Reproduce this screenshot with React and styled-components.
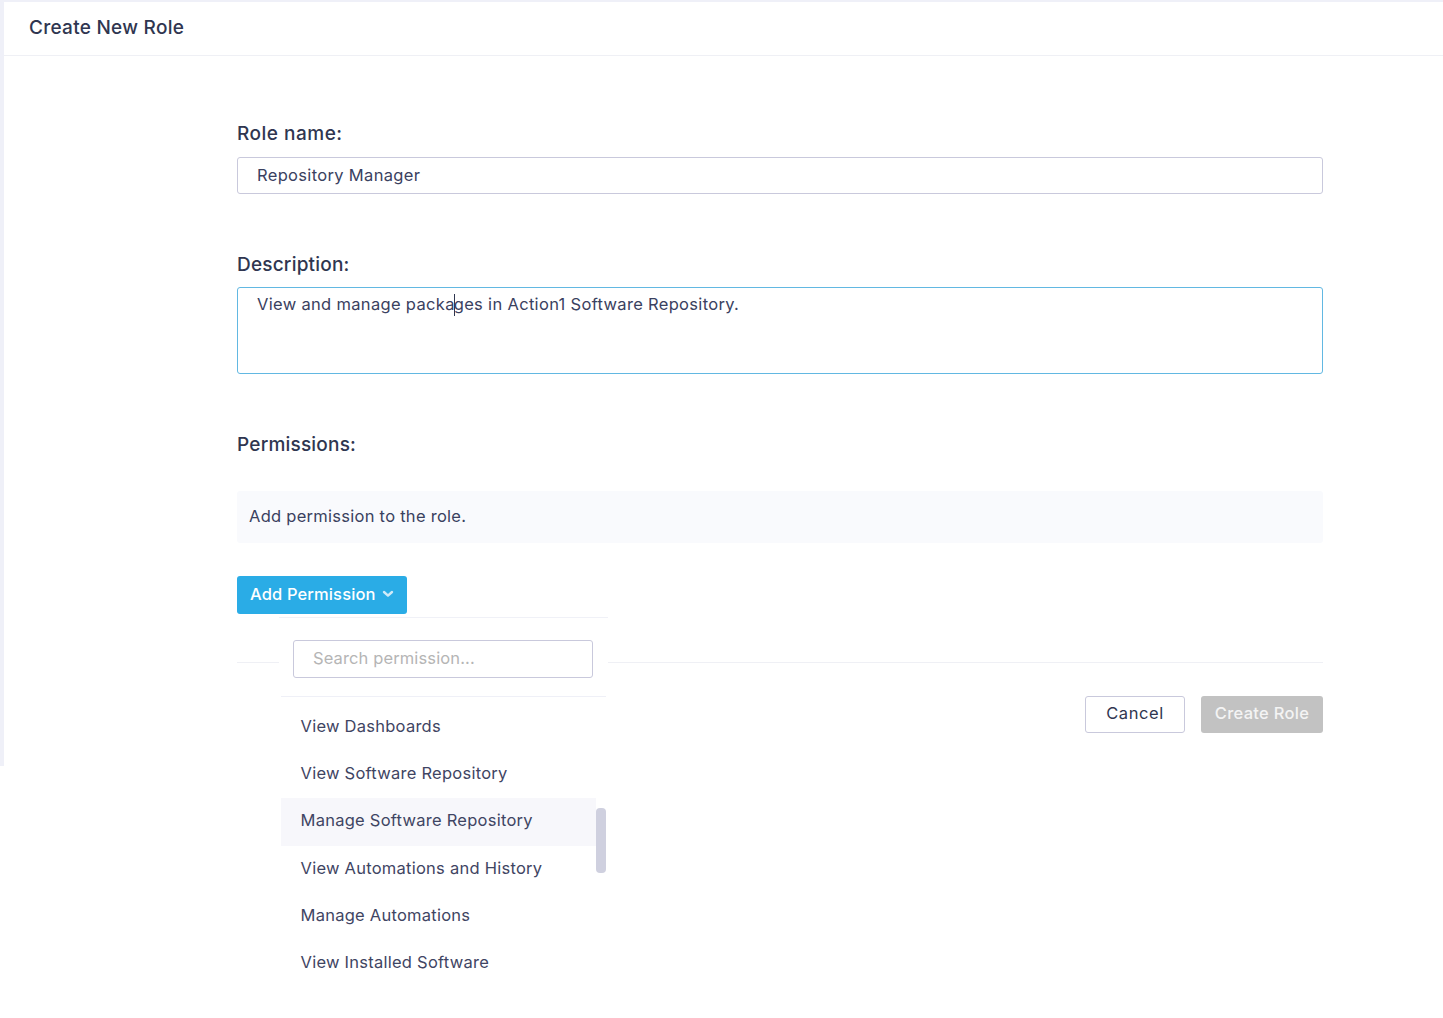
import React from "react";
import styled, { createGlobalStyle } from "styled-components";

const Global = createGlobalStyle`
  html, body { margin: 0; padding: 0; background: #fff; }
  * { box-sizing: border-box; }
  body { font-family: "Inter", "Noto Sans", sans-serif; color: #2f3650; }
  #root { min-height: 1018px; }
`;
const Shell = styled.div`
  height: 766px; background: #eff0f8; padding: 2px 0 0 4px;
`;
const Panel = styled.main`
  height: 100%; background: #fff; display: flex; flex-direction: column;
`;
const Header = styled.header`
  height: 54px; flex: none; display: flex; align-items: center; padding: 0 0 3px 25px;
  border-bottom: 1px solid #eff0f5;
`;
const Title = styled.h1`
  margin: 0; font-size: 19px; font-weight: 500; color: #2f3650; letter-spacing: 0.27px;
`;
const Form = styled.div`
  width: 1086px; margin-left: 233px; padding-top: 66px; display: flex; flex-direction: column;
`;
const Label = styled.label`
  display: block; font-size: 19px; line-height: 24px; font-weight: 500; color: #2f3650;
  letter-spacing: ${p => p.$track}px; margin-bottom: ${p => p.$gap}px;
`;
const TextInput = styled.input`
  display: block; width: 100%; height: 37px; border: 1px solid #c9c9dc; border-radius: 3px; outline: none;
  padding: 0 19px 1px; font: 400 16.5px "Inter", sans-serif; letter-spacing: 0.33px; color: #3a4160; background: #fff; margin-bottom: 59px;
`;
const TextArea = styled.div`
  height: 87px; border: 1px solid #62b8e2; border-radius: 3px; padding: 4px 19px;
  font-size: 16.5px; line-height: 24px; letter-spacing: 0.32px; color: #3a4160; margin-bottom: 59px;
`;
const Caret = styled.span`
  display: inline-block; width: 0; height: 22px; border-left: 1.5px solid #2f3650; margin: 0 -1px; vertical-align: -6px;
`;
const Notice = styled.div`
  height: 52px; background: #f9fafd; border-radius: 3px; padding: 0 12px 3px; display: flex; align-items: center;
  font-size: 16.5px; letter-spacing: 0.27px; color: #3a4160; margin-bottom: 33px;
`;
const AddWrap = styled.div`
  position: relative; margin-bottom: 48px; width: 170px;
`;
const AddButton = styled.button`
  width: 170px; height: 38px; border: 0; border-radius: 3px; background: #2aace6; color: #fff;
  font: 500 16.5px "Inter", sans-serif; letter-spacing: 0.13px; display: flex; align-items: center; padding: 0 0 3px 13px; gap: 6px; white-space: nowrap;
`;
const Dropdown = styled.div`
  position: absolute; left: 42px; top: 41px; width: 329px; height: 354px; background: #fff;
  border-top: 1px solid #f0f1f7; overflow: hidden; z-index: 2;
`;
const SearchRow = styled.div`
  padding: 22px 13px 18px 12px; border-bottom: 1px solid #eff0f7; margin: 0 2px;
`;
const Search = styled.input`
  display: block; width: 300px; height: 38px; border: 1px solid #c9c9dc; border-radius: 3px; outline: none;
  padding: 0 19px 3px; font: 400 16.5px "Inter", sans-serif; letter-spacing: 0.12px; color: #3a4160;
  &::placeholder { color: #b5b5b5; opacity: 1; }
`;
const List = styled.ul`
  list-style: none; margin: 0; padding: 7px 0 0 2px; position: relative;
`;
const Item = styled.li`
  height: 47.2px; width: 315px; padding: 0 0 3px 19.5px; display: flex; align-items: center; white-space: nowrap;
  font-size: 16.5px; letter-spacing: 0.25px; color: #3f4563; background: ${p => (p.$active ? "#f7f7fb" : "transparent")};
`;
const Thumb = styled.div`
  position: absolute; left: 317px; top: 190px; width: 10px; height: 65px; border-radius: 4px; background: #cfd0df;
`;
const Divider = styled.hr`
  margin: 0 0 33px; border: 0; border-top: 1px solid #eff0f5; width: 100%;
`;
const Actions = styled.div`
  display: flex; justify-content: flex-end; gap: 16px;
`;
const Cancel = styled.button`
  width: 100px; height: 37px; background: #fff; border: 1px solid #c9c9dc; border-radius: 3px; padding: 0 0 3px;
  font: 400 16.5px "Inter", sans-serif; letter-spacing: 0.6px; color: #2f3650;
`;
const Submit = styled.button`
  width: 122px; height: 37px; background: #c2c2c2; border: 0; border-radius: 3px; white-space: nowrap; padding: 0 0 3px;
  font: 500 16.5px "Inter", sans-serif; letter-spacing: 0.3px; color: #f4f4f4;
`;
const Chevron = () => (
  <svg width="12" height="12" viewBox="0 0 12 12" fill="none" stroke="#cfeaf8" strokeWidth="2.4" strokeLinecap="round" strokeLinejoin="round">
    <path d="M2 4l4 3.6L10 4" />
  </svg>
);

const perms = ["View Dashboards", "View Software Repository", "Manage Software Repository", "View Automations and History", "Manage Automations", "View Installed Software"];

export default function App() {
  return (
    <>
      <Global />
      <Shell>
        <Panel>
          <Header><Title>Create New Role</Title></Header>
          <Form>
            <Label $gap={11} $track={0.5}>Role name:</Label>
            <TextInput readOnly value="Repository Manager" />
            <Label $gap={10} $track={0.2}>Description:</Label>
            <TextArea>View and manage packa<Caret />ges in Action1 Software Repository.</TextArea>
            <Label $gap={34} $track={0.2}>Permissions:</Label>
            <Notice>Add permission to the role.</Notice>
            <AddWrap>
              <AddButton>Add Permission <Chevron /></AddButton>
              <Dropdown>
                <SearchRow><Search placeholder="Search permission..." readOnly /></SearchRow>
                <List>
                  {perms.map((p, i) => <Item key={p} $active={i === 2}>{p}</Item>)}
                </List>
                <Thumb />
              </Dropdown>
            </AddWrap>
            <Divider />
            <Actions>
              <Cancel>Cancel</Cancel>
              <Submit>Create Role</Submit>
            </Actions>
          </Form>
        </Panel>
      </Shell>
    </>
  );
}
